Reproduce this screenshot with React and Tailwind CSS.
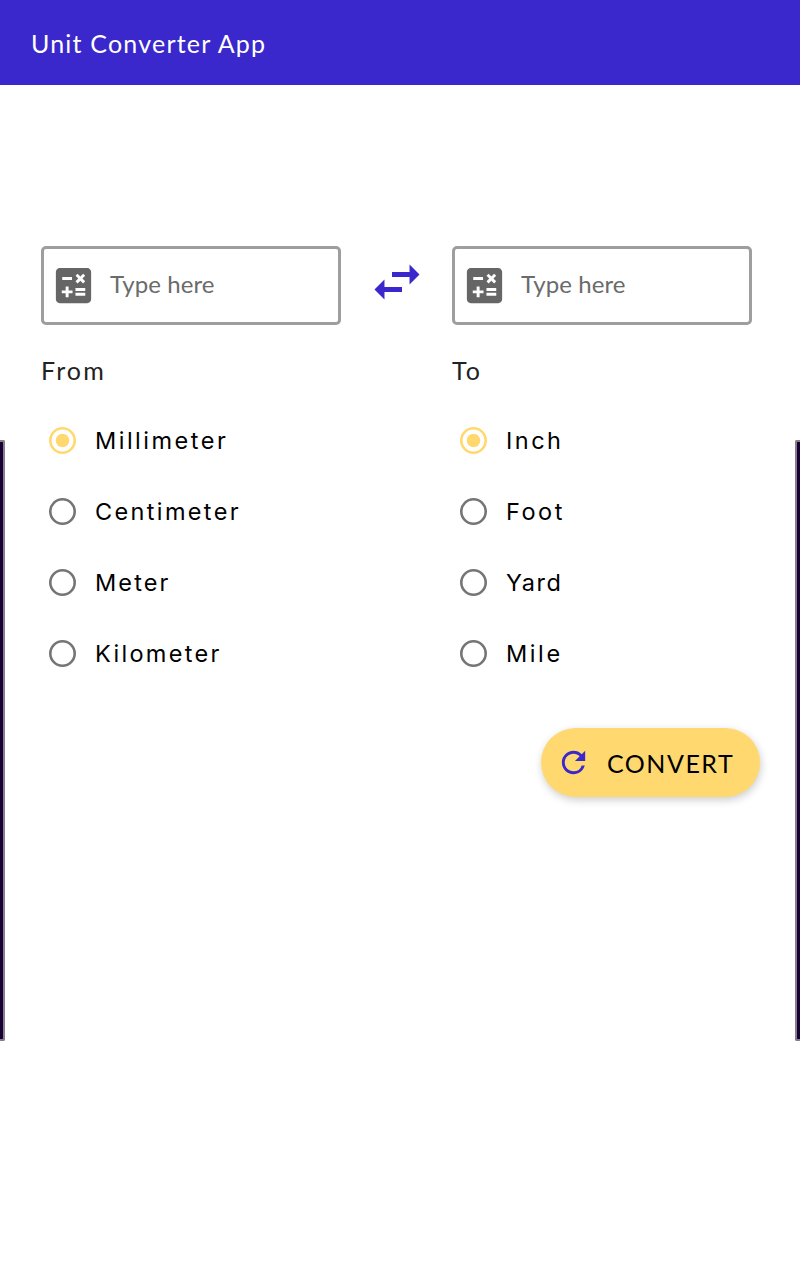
import { MdCalculate, MdRefresh, MdSwapHoriz } from "react-icons/md";

const FROM = [
  { label: "Millimeter", tracking: "tracking-[2.5px]" },
  { label: "Centimeter", tracking: "tracking-[2.35px]" },
  { label: "Meter", tracking: "tracking-[2.1px]" },
  { label: "Kilometer", tracking: "tracking-[2.3px]" },
];

const TO = [
  { label: "Inch", tracking: "tracking-[2.5px]" },
  { label: "Foot", tracking: "tracking-[2.5px]" },
  { label: "Yard", tracking: "tracking-[1.5px]" },
  { label: "Mile", tracking: "tracking-[2.6px]" },
];

function Field() {
  return (
    <div className="flex h-[79px] w-[300px] items-center rounded-[5px] border-3 border-[#9e9e9e] pl-[6px]">
      <MdCalculate className="size-[47px] shrink-0 text-[#666666]" />
      <span className="mb-[3px] ml-[13px] whitespace-nowrap font-['Lato',sans-serif] text-[24px] leading-[30px] tracking-[0.1px] text-[#6b6b6b]">
        Type here
      </span>
    </div>
  );
}

function Radio({ label, tracking, checked }) {
  return (
    <div className="flex h-[71px] items-center pl-[8px]">
      <svg viewBox="0 0 27 27" className={checked ? "size-[27px] text-[#ffd970]" : "size-[27px] text-[#757575]"}>
        <circle cx="13.5" cy="13.5" r="12.2" fill="none" stroke="currentColor" strokeWidth="2.6" />
        {checked && <circle cx="13.5" cy="13.5" r="6.8" fill="currentColor" />}
      </svg>
      <span className={`ml-[19px] whitespace-nowrap font-['Inter',sans-serif] text-[23.5px] leading-[30px] text-black ${tracking}`}>
        {label}
      </span>
    </div>
  );
}

function Column({ title, titleClass, options }) {
  return (
    <section className="w-[300px]">
      <Field />
      <h2 className={`mt-[29px] h-[32px] whitespace-nowrap font-['Lato',sans-serif] text-[25px] leading-[32px] text-[#222222] ${titleClass}`}>
        {title}
      </h2>
      <div className="mt-[19px]">
        {options.map((option, index) => (
          <Radio key={option.label} {...option} checked={index === 0} />
        ))}
      </div>
    </section>
  );
}

export default function App() {
  return (
    <div className="relative h-[1280px] w-[800px] overflow-hidden bg-white">
      <header className="flex h-[85px] items-center bg-[#3a28cc] pl-[31px]">
        <h1 className="whitespace-nowrap font-['Lato',sans-serif] text-[25px] leading-[32px] tracking-[1.2px] text-white">
          Unit Converter App
        </h1>
      </header>
      <main className="pt-[161px]">
        <div className="flex pl-[41px]">
          <Column title="From" titleClass="tracking-[2.1px]" options={FROM} />
          <div className="flex w-[111px] justify-center pt-[6px]">
            <MdSwapHoriz className="size-[60px] text-[#3a28cc]" />
          </div>
          <Column title="To" titleClass="tracking-[2.1px]" options={TO} />
        </div>
        <div className="mt-[39px] flex justify-end pr-[40px]">
          <button className="flex h-[69px] w-[219px] items-center rounded-full bg-[#ffd970] pl-[15px] shadow-[1px_3px_8px_rgba(0,0,0,0.2)]">
            <MdRefresh className="size-[35px] shrink-0 text-[#3a28cc]" />
            <span className="ml-[16px] whitespace-nowrap font-['Lato',sans-serif] text-[25px] leading-[32px] tracking-[1.5px] text-black">
              CONVERT
            </span>
          </button>
        </div>
      </main>
      <div className="absolute top-[440px] left-0 h-[601px] w-[5px] rounded-r-[2px] border-y-2 border-r-2 border-[#85808c] bg-[#170033]" />
      <div className="absolute top-[440px] right-0 h-[601px] w-[5px] rounded-l-[2px] border-y-2 border-l-2 border-[#85808c] bg-[#170033]" />
    </div>
  );
}
